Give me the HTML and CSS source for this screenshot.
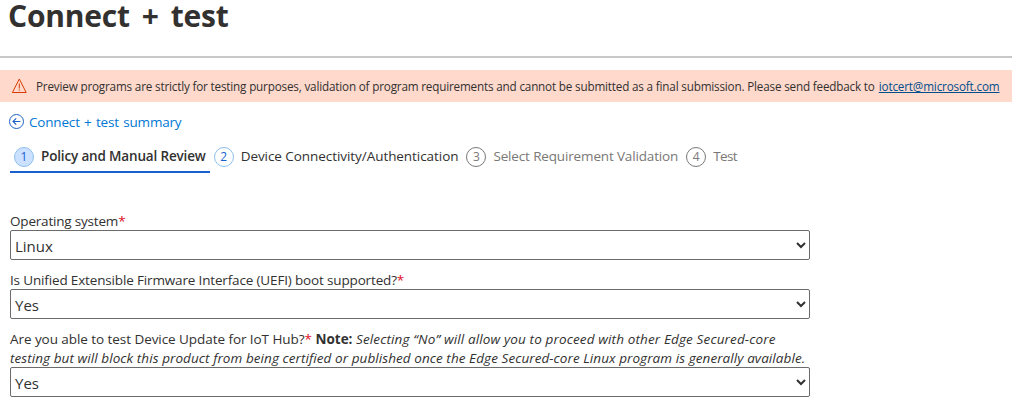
FILE: index.html
```html
<!DOCTYPE html>
<html lang="en">
<head>
<meta charset="utf-8">
<title>Connect + test</title>
<link rel="stylesheet" href="styles.css">
</head>
<body>
<header class="page-header"><h1 class="title">Connect + test</h1></header>
<div class="banner">
  <svg class="warn" width="16" height="16" viewBox="0 0 16 16" fill="none" stroke="#d83b01"><path d="M8.3 1 15.2 14.5H1.4Z"/><path d="M8.3 5.5v5M8.3 11.5v1.2"/></svg>
  <span class="banner-text">Preview programs are strictly for testing purposes, validation of program requirements and cannot be submitted as a final submission. Please send feedback to</span>
  <a class="mail" href="#">iotcert@microsoft.com</a>
</div>
<a class="back" href="#">
  <svg width="16" height="16" viewBox="0 0 16 16" fill="none" stroke="#1b62c4"><circle cx="7.5" cy="7.5" r="7"/><path d="M11.3 7.5H4.1M7.2 4.3 4 7.5l3.2 3.2" stroke-width="1.1"/></svg>
  <span class="back-text">Connect + test summary</span>
</a>
<nav class="steps">
  <div class="step active"><span class="num">1</span><span class="label l1">Policy and Manual Review</span></div>
  <div class="step next"><span class="num">2</span><span class="label l2">Device Connectivity/Authentication</span></div>
  <div class="step"><span class="num">3</span><span class="label l3">Select Requirement Validation</span></div>
  <div class="step"><span class="num">4</span><span class="label l4">Test</span></div>
</nav>
<form class="form">
  <div class="field">
    <label class="q q1" for="os">Operating system<span class="req">*</span></label>
    <select id="os"><option>Linux</option></select>
  </div>
  <div class="field">
    <label class="q q2" for="uefi">Is Unified Extensible Firmware Interface (UEFI) boot supported?<span class="req">*</span></label>
    <select id="uefi"><option>Yes</option></select>
  </div>
  <div class="field">
    <label class="q" for="hub"><span class="q3">Are you able to test Device Update for IoT Hub?<span class="req">*</span></span> <b class="note">Note:</b> <i class="i1">Selecting “No” will allow you to proceed with other Edge Secured-core</i><br><i class="i2">testing but will block this product from being certified or published once the Edge Secured-core Linux program is generally available.</i></label>
    <select id="hub"><option>Yes</option></select>
  </div>
</form>
</body>
</html>
```
FILE: styles.css
```css
* { box-sizing: border-box; }
body {
  margin: 0;
  background: #fff;
  color: #323130;
  font-family: "Segoe UI", "Open Sans", sans-serif;
  font-size: 13.5px;
  white-space: nowrap;
}
svg { flex: none; }
.page-header { height: 58px; border-bottom: 2px solid #c8c8c8; padding-left: 8px; }
.title { margin: 0; font-size: 30px; line-height: 32px; font-weight: 700; letter-spacing: -.2px; word-spacing: 4.3px; }
.banner {
  display: flex; align-items: center;
  height: 32px; margin-top: 12px; padding-left: 11px;
  background: #fed9cc; font-size: 11.7px;
}
.banner-text { margin-left: 9px; letter-spacing: -.175px; }
.mail { margin-left: 4px; color: #004e8c; letter-spacing: -.16px; }
.back {
  display: flex; align-items: center; gap: 4px;
  width: max-content; height: 20px; margin: 10px 0 0 9px;
  color: #0078d4; text-decoration: none;
}
.back-text { letter-spacing: -.18px; word-spacing: 1px; }
.steps { display: flex; margin: 11px 0 0 10px; height: 30px; }
.step { display: flex; padding: 4px 4px 0; gap: 7px; height: 30px; line-height: 19px; color: #7a7876; }
.num {
  width: 20px; height: 20px; border: 1px solid #7a7876; border-radius: 50%;
  text-align: center; font-size: 12px; line-height: 18px;
}
.l1 { letter-spacing: -.16px; }
.l2 { letter-spacing: -.06px; }
.l3 { letter-spacing: -.15px; }
.l4 { letter-spacing: -.6px; }
.next { color: #323130; }
.next .num { border-color: #8cc0ee; color: #1b5fd0; }
.active { color: #323130; font-weight: 600; border-bottom: 2px solid #1a5fd0; }
.active .num { background: #cce0ff; border-color: #8cc0ee; color: #1b5fd0; font-weight: 400; }
.form { margin: 39px 0 0 10px; width: 800px; }
.field { display: flex; flex-direction: column; margin-bottom: 11px; }
.field:last-child { margin-bottom: 0; }
.q { line-height: 19px; }
.q1 { letter-spacing: -.19px; }
.q2 { letter-spacing: -.155px; }
.q3 { letter-spacing: -.06px; }
.i1 { letter-spacing: .135px; }
.i2 { letter-spacing: .075px; }
.req { color: #e00b1c; }
select {
  width: 800px; height: 30px; margin-top: -1px; padding: 2px 0 0; background: #fff; color: #323130;
  border: 1px solid #6b6b6b; border-radius: 2px;
  font-family: "Segoe UI", "Open Sans", sans-serif; font-size: 15px;
}
```
